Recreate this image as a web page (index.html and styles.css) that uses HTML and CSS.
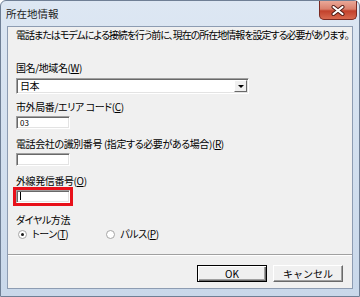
FILE: index.html
```html
<!DOCTYPE html>
<html lang="ja">
<head>
  <meta charset="UTF-8" />
  <meta name="viewport" content="width=device-width, initial-scale=1.0" />
  <title>所在地情報</title>
  <link rel="stylesheet" href="styles.css">
</head>
<body>
  <div class="window">
    <div class="titlebar">
      <span class="title">所在地情報</span>
      <span class="caption-box">
        <svg class="glyph" width="14" height="11" viewBox="0 0 14 11">
          <path d="M2.5 2 L11.5 9 M11.5 2 L2.5 9" stroke="#4a1812" stroke-width="4" stroke-linecap="round"/>
          <path d="M2.5 2 L11.5 9 M11.5 2 L2.5 9" stroke="#ffffff" stroke-width="2.2" stroke-linecap="round"/>
        </svg>
      </span>
    </div>

    <div class="client">
      <div class="content">
        <p class="intro">電話またはモデムによる接続を行う前に、現在の所在地情報を設定する必要があります。</p>

        <label class="field-label gap-country">国名/地域名(<u>W</u>)</label>
        <div class="combo">
          <span class="combo-value">日本</span>
          <span class="combo-btn"><span class="arrow"></span></span>
        </div>

        <label class="field-label gap-area">市外局番/エリア コード(<u>C</u>)</label>
        <div class="textbox">03</div>

        <label class="field-label gap-carrier">電話会社の識別番号 (指定する必要がある場合)(<u>R</u>)</label>
        <div class="textbox"></div>

        <label class="field-label gap-outside">外線発信番号(<u>O</u>)</label>
        <div class="textbox focused"><span class="caret"></span></div>

        <div class="field-label gap-dial">ダイヤル方法</div>
        <div class="radios">
          <span class="radio-item">
            <span class="radio checked"></span><span>トーン(<u>T</u>)</span>
          </span>
          <span class="radio-item pulse">
            <span class="radio"></span><span>パルス(<u>P</u>)</span>
          </span>
        </div>
      </div>

      <div class="footer">
        <button class="btn default">OK</button>
        <button class="btn">キャンセル</button>
      </div>
    </div>
  </div>
</body>
</html>
```

FILE: styles.css
```css
:root {
  --face: #f0f0f0;
  --frame-top: #dde7f3;
  --frame-bottom: #c9d8ea;
  --text: #000000;
  --shadow: #a0a0a0;
  --dark: #696969;
}

* {
  box-sizing: border-box;
}

body {
  margin: 0;
  font-family: "Noto Sans CJK JP", "Noto Sans", sans-serif;
  font-size: 10px;
  font-feature-settings: "palt";
  letter-spacing: -0.4px;
  color: var(--text);
  background: #ffffff;
}

.window {
  width: 360px;
  height: 297px;
  display: flex;
  flex-direction: column;
  padding: 0 6px 7px 6px;
  background: linear-gradient(180deg, var(--frame-top), var(--frame-bottom));
  border: 1px solid #6f7f95;
  border-radius: 6px 6px 0 0;
}

.titlebar {
  flex: none;
  height: 25px;
  margin-right: -4px;
  display: flex;
  align-items: flex-start;
  justify-content: space-between;
}

.title {
  margin: 6px 0 0 -1px;
  font-size: 10.5px;
  letter-spacing: 0;
  line-height: 14px;
  color: #1e1e1e;
}

.caption-box {
  flex: 0 0 38px;
  width: 38px;
  height: 19px;
  display: flex;
  align-items: center;
  justify-content: center;
  border: 1px solid #7a2a22;
  border-top: 0;
  border-radius: 0 0 5px 5px;
  background-color: #c9563f;
  background-image: linear-gradient(180deg, #eaa898 0%, #d9806c 45%, #c2412b 55%, #d8694f 100%);
}

.glyph {
  display: block;
}

.client {
  flex: 1;
  display: flex;
  flex-direction: column;
  background: var(--face);
  border: 1px solid #8d9cb2;
}

.content {
  flex: 1;
  padding: 1px 8px 0 8px;
}

.intro {
  margin: 0;
  line-height: 14px;
  letter-spacing: -1px;
  white-space: nowrap;
}

.field-label {
  display: block;
  line-height: 14px;
}

.gap-country { margin-top: 19px; }
.gap-area { margin-top: 6px; }
.gap-carrier { margin-top: 8px; }
.gap-outside { margin-top: 8px; }
.gap-dial { margin-top: 10px; }

.combo {
  width: 233px;
  height: 16px;
  margin-top: 3px;
  display: flex;
  background: #ffffff;
  border: 1px solid;
  border-color: var(--shadow) #ffffff #ffffff var(--shadow);
  box-shadow: inset 1px 1px 0 var(--dark), inset -1px -1px 0 #e3e3e3;
}

.combo-value {
  flex: 1;
  padding: 0 0 0 3px;
  line-height: 14px;
}

.combo-btn {
  width: 13px;
  display: flex;
  align-items: center;
  justify-content: center;
  margin: 1px 1px 1px 0;
  background: var(--face);
  border: 1px solid;
  border-color: #ffffff var(--dark) var(--dark) #ffffff;
}

.arrow {
  width: 0;
  height: 0;
  border-left: 3px solid transparent;
  border-right: 3px solid transparent;
  border-top: 3px solid #000000;
}

.textbox {
  width: 54px;
  height: 13px;
  margin-top: 2px;
  padding-left: 3px;
  font-size: 8px;
  line-height: 11px;
  letter-spacing: 0;
  background: #ffffff;
  border: 1px solid;
  border-color: var(--shadow) #ffffff #ffffff var(--shadow);
  box-shadow: inset 1px 1px 0 var(--dark), inset -1px -1px 0 #e3e3e3;
}

.textbox.focused {
  margin-top: 2px;
  outline: 3px solid #e8101a;
  outline-offset: 0;
}

.caret {
  display: inline-block;
  width: 1px;
  height: 8px;
  margin-top: 1px;
  background: #000000;
}

.radios {
  display: flex;
  margin-top: 0;
  padding-left: 2px;
  line-height: 14px;
}

.radio-item {
  display: flex;
  align-items: center;
  gap: 5px;
}

.radio-item.pulse {
  margin-left: 38px;
}

.radio {
  width: 9px;
  height: 9px;
  border-radius: 50%;
  background: #ffffff;
  border: 1px solid #a5a5a5;
  display: flex;
  align-items: center;
  justify-content: center;
}

.radio.checked::after {
  content: "";
  width: 3px;
  height: 3px;
  border-radius: 50%;
  background: #1a1a1a;
}

.footer {
  flex: none;
  height: 34px;
  display: flex;
  justify-content: flex-end;
  align-items: flex-start;
  gap: 6px;
  padding: 10px 9px 0 0;
  border-top: 1px solid #a0a0a0;
  box-shadow: inset 0 1px 0 #ffffff;
}

.btn {
  width: 70px;
  height: 17px;
  padding: 0;
  font-family: inherit;
  font-size: 10px;
  line-height: 13px;
  color: var(--text);
  background: var(--face);
  border: 1px solid;
  border-color: #ffffff var(--dark) var(--dark) #ffffff;
  box-shadow: inset -1px -1px 0 var(--shadow);
}

.btn.default {
  border: 1px solid #000000;
  box-shadow: inset 1px 1px 0 #ffffff, inset -1px -1px 0 var(--dark), inset -2px -2px 0 var(--shadow);
}
```
